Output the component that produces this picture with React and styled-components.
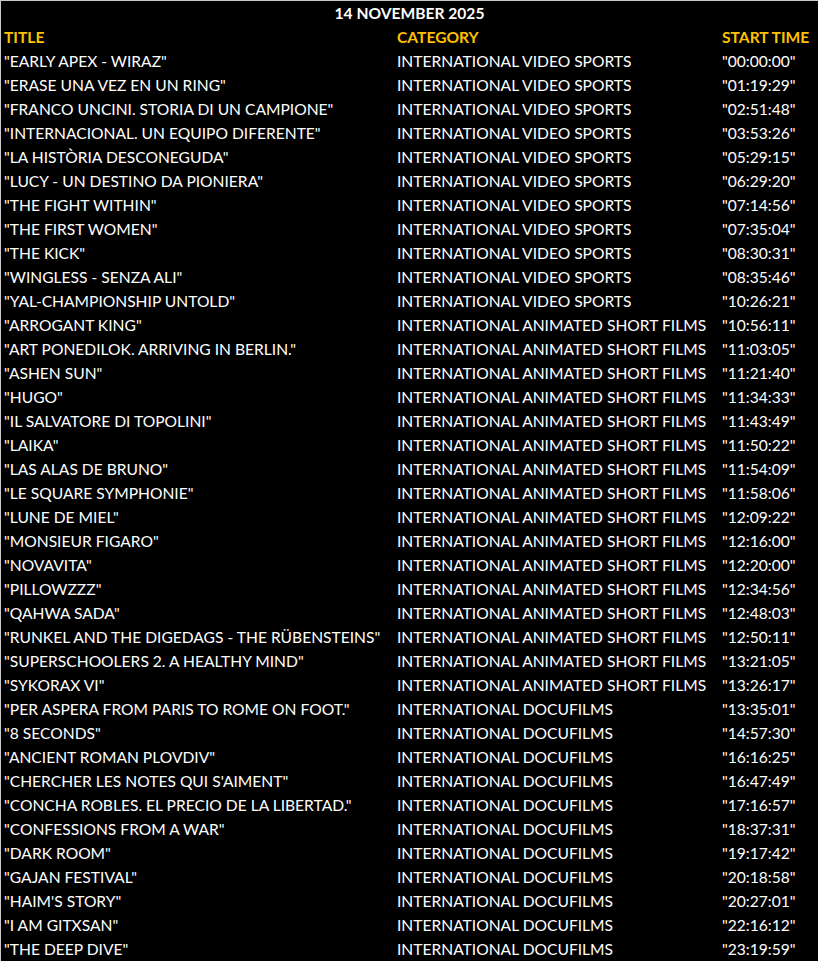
import React from "react";
import styled, { createGlobalStyle } from "styled-components";

const GlobalStyle = createGlobalStyle`
  html, body {
    margin: 0;
    padding: 0;
    background: #000;
  }
`;

const Sheet = styled.div`
  width: 817px;
  border-top: 1px solid #c8c8c8;
  border-left: 1px solid #c8c8c8;
  background: #000;
  color: #fff;
  font-family: Lato, "Liberation Sans", sans-serif;
  font-size: 15.6px;
`;

const DateRow = styled.div`
  height: 24px;
  line-height: 24px;
  text-align: center;
  font-weight: 700;
`;

const Row = styled.div`
  display: grid;
  grid-template-columns: 393px 325px 1fr;
  height: 24px;
  line-height: 24px;
  color: ${(p) => (p.$head ? "#ffc000" : "#fff")};
  font-weight: ${(p) => (p.$head ? 700 : 400)};
`;

const Cell = styled.div`
  padding-left: 3px;
  white-space: nowrap;
  overflow: hidden;
`;

const VS = "INTERNATIONAL VIDEO SPORTS";
const AS = "INTERNATIONAL ANIMATED SHORT FILMS";
const DF = "INTERNATIONAL DOCUFILMS";

const rows = [
  ["EARLY APEX - WIRAZ", VS, "00:00:00"],
  ["ERASE UNA VEZ EN UN RING", VS, "01:19:29"],
  ["FRANCO UNCINI. STORIA DI UN CAMPIONE", VS, "02:51:48"],
  ["INTERNACIONAL. UN EQUIPO DIFERENTE", VS, "03:53:26"],
  ["LA HISTÒRIA DESCONEGUDA", VS, "05:29:15"],
  ["LUCY - UN DESTINO DA PIONIERA", VS, "06:29:20"],
  ["THE FIGHT WITHIN", VS, "07:14:56"],
  ["THE FIRST WOMEN", VS, "07:35:04"],
  ["THE KICK", VS, "08:30:31"],
  ["WINGLESS - SENZA ALI", VS, "08:35:46"],
  ["YAL-CHAMPIONSHIP UNTOLD", VS, "10:26:21"],
  ["ARROGANT KING", AS, "10:56:11"],
  ["ART PONEDILOK. ARRIVING IN BERLIN.", AS, "11:03:05"],
  ["ASHEN SUN", AS, "11:21:40"],
  ["HUGO", AS, "11:34:33"],
  ["IL SALVATORE DI TOPOLINI", AS, "11:43:49"],
  ["LAIKA", AS, "11:50:22"],
  ["LAS ALAS DE BRUNO", AS, "11:54:09"],
  ["LE SQUARE SYMPHONIE", AS, "11:58:06"],
  ["LUNE DE MIEL", AS, "12:09:22"],
  ["MONSIEUR FIGARO", AS, "12:16:00"],
  ["NOVAVITA", AS, "12:20:00"],
  ["PILLOWZZZ", AS, "12:34:56"],
  ["QAHWA SADA", AS, "12:48:03"],
  ["RUNKEL AND THE DIGEDAGS - THE RÜBENSTEINS", AS, "12:50:11"],
  ["SUPERSCHOOLERS 2. A HEALTHY MIND", AS, "13:21:05"],
  ["SYKORAX VI", AS, "13:26:17"],
  ["PER ASPERA FROM PARIS TO ROME ON FOOT.", DF, "13:35:01"],
  ["8 SECONDS", DF, "14:57:30"],
  ["ANCIENT ROMAN PLOVDIV", DF, "16:16:25"],
  ["CHERCHER LES NOTES QUI S'AIMENT", DF, "16:47:49"],
  ["CONCHA ROBLES. EL PRECIO DE LA LIBERTAD.", DF, "17:16:57"],
  ["CONFESSIONS FROM A WAR", DF, "18:37:31"],
  ["DARK ROOM", DF, "19:17:42"],
  ["GAJAN FESTIVAL", DF, "20:18:58"],
  ["HAIM'S STORY", DF, "20:27:01"],
  ["I AM GITXSAN", DF, "22:16:12"],
  ["THE DEEP DIVE", DF, "23:19:59"],
];

export default function App() {
  return (
    <>
      <GlobalStyle />
      <Sheet>
        <DateRow>14 NOVEMBER 2025</DateRow>
        <Row $head>
          <Cell>TITLE</Cell>
          <Cell>CATEGORY</Cell>
          <Cell>START TIME</Cell>
        </Row>
        {rows.map(([title, cat, time]) => (
          <Row key={title}>
            <Cell>"{title}"</Cell>
            <Cell>{cat}</Cell>
            <Cell>"{time}"</Cell>
          </Row>
        ))}
      </Sheet>
    </>
  );
}
